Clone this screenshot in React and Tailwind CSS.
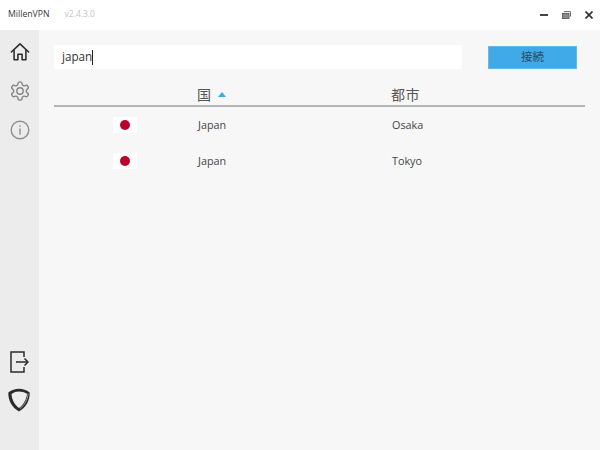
const rows = [
  { country: "Japan", city: "Osaka" },
  { country: "Japan", city: "Tokyo" },
];

const font = "font-['Open_Sans','Noto_Sans_CJK_JP',sans-serif]";

function Sidebar() {
  return (
    <div className="flex w-[39px] shrink-0 flex-col items-center justify-between bg-[#ececec] pt-[12px] pb-[38px]">
      <div className="flex flex-col items-center">
        <svg width="20" height="20" viewBox="0 0 22 22" fill="none" stroke="#2b2b2b" strokeWidth="1.700" strokeLinejoin="round" strokeLinecap="round">
          <path d="M1.500 11 11 2l9.500 9" />
          <path d="M4.500 9v10.500h4.200v-6h4.600v6h4.200V9" />
        </svg>
        <svg width="22" height="22" viewBox="0 0 24 24" fill="none" stroke="#858585" strokeWidth="1.500" strokeLinejoin="round" className="mt-[18px]">
          <path d="M12.220 2h-.44a2 2 0 0 0-2 2v.18a2 2 0 0 1-1 1.730l-.43.25a2 2 0 0 1-2 0l-.15-.08a2 2 0 0 0-2.730.73l-.22.38a2 2 0 0 0 .73 2.730l.15.1a2 2 0 0 1 1 1.720v.51a2 2 0 0 1-1 1.740l-.15.09a2 2 0 0 0-.73 2.730l.22.38a2 2 0 0 0 2.730.73l.15-.08a2 2 0 0 1 2 0l.43.25a2 2 0 0 1 1 1.730V20a2 2 0 0 0 2 2h.44a2 2 0 0 0 2-2v-.18a2 2 0 0 1 1-1.730l.43-.25a2 2 0 0 1 2 0l.15.08a2 2 0 0 0 2.730-.73l.22-.39a2 2 0 0 0-.73-2.730l-.15-.08a2 2 0 0 1-1-1.740v-.5a2 2 0 0 1 1-1.740l.15-.09a2 2 0 0 0 .73-2.730l-.22-.38a2 2 0 0 0-2.730-.73l-.15.08a2 2 0 0 1-2 0l-.43-.25a2 2 0 0 1-1-1.730V4a2 2 0 0 0-2-2z" />
          <circle cx="12" cy="12" r="3.500" />
        </svg>
        <svg width="20" height="20" viewBox="0 0 20 20" fill="none" stroke="#8f8f8f" strokeWidth="1.400" strokeLinecap="round" className="mt-[18px]">
          <circle cx="10" cy="10" r="8.800" />
          <path d="M10 9v5.200" />
          <path d="M10 5.800v.4" />
        </svg>
      </div>
      <div className="flex flex-col items-center gap-[15px]">
        <svg width="19" height="22" viewBox="0 0 19 22" fill="none" stroke="#2b2b2b" strokeWidth="1.500" className="mr-[1px]">
          <path d="M14 6V1H1v20h13v-5" />
          <path d="M6 11h12" />
          <path d="m14.500 7.500 3.500 3.500-3.500 3.500" />
        </svg>
        <svg width="22" height="24" viewBox="0 0 22 24" className="mr-[1px]">
          <path
            fillRule="evenodd"
            fill="#2b2b2b"
            d="M.3 4.500C3.600 2 7.200.8 11 .8S18.400 2 21.700 4.500c.2 7.800-3.600 15-10.700 19C3.900 19.500.1 12.300.3 4.500zM3.500 6c.4 5.800 3.200 10.800 7.500 14 4.600-3.400 7.400-8.300 8-14.300C16.400 4.200 13.700 3.500 11 3.500S5.800 4.300 3.500 6z"
          />
          <path d="M20 5.500c-.4 6.500-3.500 11.500-8 15" fill="none" stroke="#9a9a9a" strokeWidth="1" />
        </svg>
      </div>
    </div>
  );
}

export default function App() {
  return (
    <div className={`flex h-[450px] w-[600px] flex-col overflow-hidden bg-white ${font}`}>
      <div className="flex h-[30px] shrink-0 items-center justify-between pl-[8px] pr-[7px]">
        <div className="flex items-center gap-[15px] pb-[1px]">
          <span className="text-[8.700px] text-[#3a3a3a]">MillenVPN</span>
          <span className="text-[8.500px] text-[#c4c4c4]">v2.4.3.0</span>
        </div>
        <div className="flex items-center gap-[14px]">
          <svg width="8" height="8" viewBox="0 0 8 8" stroke="#444" strokeWidth="2">
            <path d="M0 4h8" />
          </svg>
          <svg width="9" height="8" viewBox="0 0 9 8" fill="none" stroke="#666" strokeWidth="1">
            <rect x="0.500" y="2.500" width="6.500" height="5" fill="#8a8a8a" />
            <path d="M2 .6h6.400v5" />
          </svg>
          <svg width="8" height="8" viewBox="0 0 8 8" stroke="#333" strokeWidth="1.700">
            <path d="m.5.5 7 7M7.500.5l-7 7" />
          </svg>
        </div>
      </div>

      <div className="flex min-h-0 flex-1">
        <Sidebar />
        <div className="flex-1 bg-[#f7f7f7] pl-[15px] pr-[15px] pt-[15px]">
          <div className="flex items-center justify-between pr-[8px]">
            <div className="flex h-[24px] w-[408px] items-center bg-white pl-[8px] text-[11.700px] text-[#333]">
              japan
              <span className="h-[15px] w-px bg-[#222]" />
            </div>
            <button className="h-[23px] w-[89px] border border-[#64b9ee] bg-[#40a9e8] text-[11.500px] text-[#2c4c63]">
              接続
            </button>
          </div>

          <div className="mt-[16px] flex h-[22px] items-center border-b-2 border-[#b4b4b4] pb-[2px] text-[14px] text-[#555]">
            <div className="w-[143px]" />
            <div className="flex w-[194px] items-center gap-[7px]">
              国
              <span className="h-0 w-0 border-x-[4px] border-b-[5px] border-x-transparent border-b-[#3fa9ea]" />
            </div>
            <div className="tracking-[0.5px]">都市</div>
          </div>

          {rows.map((row) => (
            <div key={row.city} className="flex h-[36px] items-center text-[10.800px] text-[#444]">
              <div className="flex w-[144px] justify-end pr-[61px]">
                <div className="flex h-[16px] w-[24px] items-center justify-center bg-white">
                  <div className="h-[10px] w-[10px] rounded-full bg-[#bc002d]" />
                </div>
              </div>
              <div className="w-[194px]">{row.country}</div>
              <div>{row.city}</div>
            </div>
          ))}
        </div>
      </div>
    </div>
  );
}
